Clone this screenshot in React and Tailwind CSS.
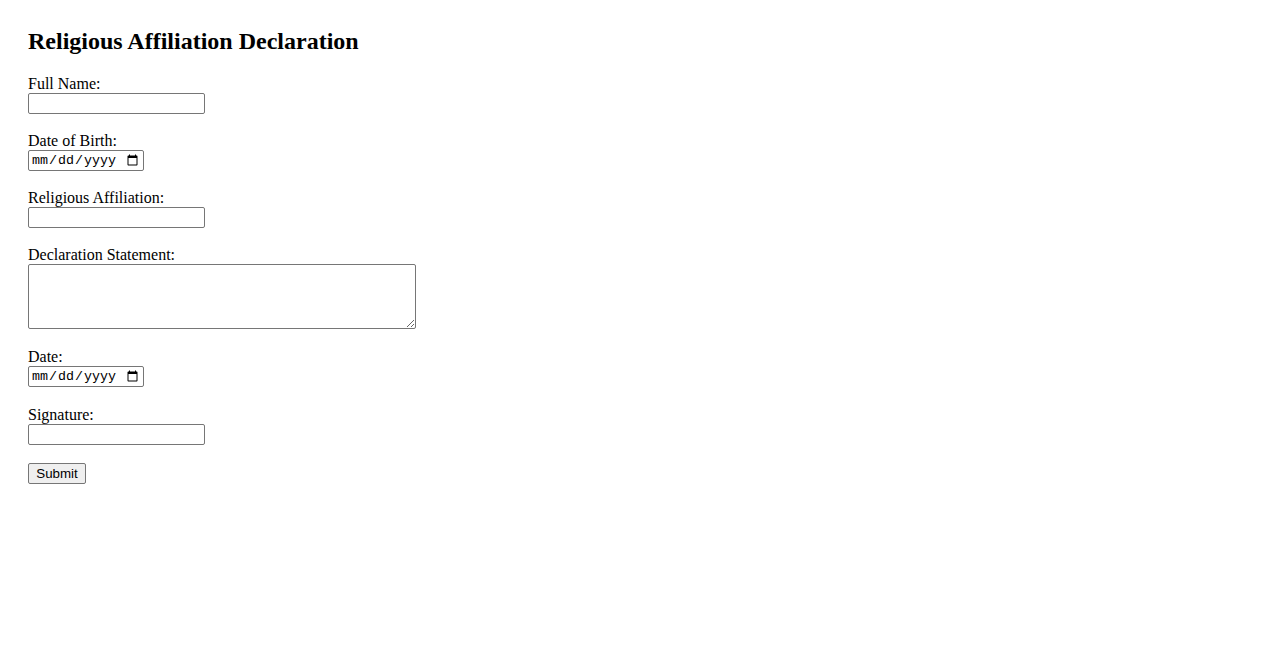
export default function App() {
    const inputCls = 'block w-[177px] h-[21px] border border-[#767676] rounded-[2px] bg-white px-[2px] text-[13.33px] font-["Liberation_Sans",sans-serif]';
    const dateCls = 'block w-[116px] h-[21px] border border-[#767676] rounded-[2px] bg-white px-[2px] text-[13.33px] font-["Liberation_Mono",monospace]';
    const labelCls = 'block h-[18px] leading-[18px] text-[16px]';

    return (
        <div className="min-h-[650px] bg-white text-black pt-[27px] pl-[28px] font-['Liberation_Serif',serif]">
            <h2 className="h-[28px] leading-[28px] text-[24px] font-bold mb-[20px]">Religious Affiliation Declaration</h2>

            <form onSubmit={(e) => e.preventDefault()}>
                <label htmlFor="name" className={labelCls}>Full Name:</label>
                <input type="text" id="name" className={inputCls} />

                <label htmlFor="dob" className={`${labelCls} mt-[18px]`}>Date of Birth:</label>
                <input type="date" id="dob" className={dateCls} />

                <label htmlFor="religion" className={`${labelCls} mt-[18px]`}>Religious Affiliation:</label>
                <input type="text" id="religion" className={inputCls} />

                <label htmlFor="statement" className={`${labelCls} mt-[18px]`}>Declaration Statement:</label>
                <textarea id="statement" className="block w-[388px] h-[65px] border border-[#767676] rounded-[2px] bg-white p-[2px] text-[13.33px] font-['Liberation_Mono',monospace] resize" />

                <label htmlFor="date" className={`${labelCls} mt-[19px]`}>Date:</label>
                <input type="date" id="date" className={dateCls} />

                <label htmlFor="signature" className={`${labelCls} mt-[19px]`}>Signature:</label>
                <input type="text" id="signature" className={inputCls} />

                <button type="submit" className="block mt-[18px] w-[58px] h-[21px] border border-[#767676] rounded-[2px] bg-[#efefef] text-[13.33px] leading-[19px] font-['Liberation_Sans',sans-serif]">
                    Submit
                </button>
            </form>
        </div>
    );
}
